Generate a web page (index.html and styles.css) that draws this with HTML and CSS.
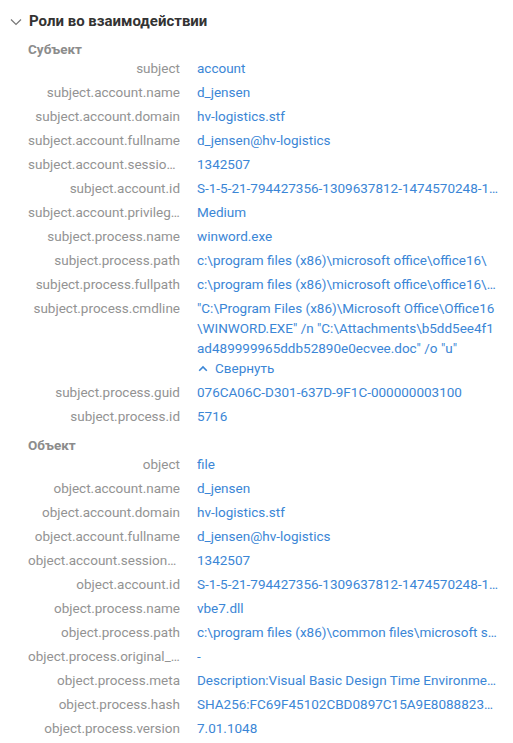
FILE: index.html
```html
<!DOCTYPE html>
<html lang="ru">
<head>
<meta charset="utf-8">
<link rel="stylesheet" href="styles.css">
</head>
<body>
<div class="panel">
  <div class="panel-head">
    <svg class="chev" width="12" height="8" viewBox="0 0 12 8"><path d="M1 1.5 L6 6.5 L11 1.5" fill="none" stroke="#777" stroke-width="1.2"/></svg>
    <span class="panel-title">Роли во взаимодействии</span>
  </div>

  <section class="group">
    <div class="group-title">Субъект</div>
    <div class="rows">
      <div class="row"><div class="k">subject</div><div class="v">account</div></div>
      <div class="row"><div class="k">subject.account.name</div><div class="v">d_jensen</div></div>
      <div class="row"><div class="k">subject.account.domain</div><div class="v">hv-logistics.stf</div></div>
      <div class="row"><div class="k">subject.account.fullname</div><div class="v">d_jensen@hv-logistics</div></div>
      <div class="row"><div class="k">subject.account.session_id</div><div class="v">1342507</div></div>
      <div class="row"><div class="k">subject.account.id</div><div class="v">S-1-5-21-794427356-1309637812-1474570248-1103</div></div>
      <div class="row"><div class="k">subject.account.privileges</div><div class="v">Medium</div></div>
      <div class="row"><div class="k">subject.process.name</div><div class="v">winword.exe</div></div>
      <div class="row"><div class="k">subject.process.path</div><div class="v">c:\program files (x86)\microsoft office\office16\</div></div>
      <div class="row"><div class="k">subject.process.fullpath</div><div class="v">c:\program files (x86)\microsoft office\office16\winword.exe</div></div>
      <div class="row"><div class="k">subject.process.cmdline</div><div class="v multi">"C:\Program Files (x86)\Microsoft Office\Office16<br>\WINWORD.EXE" /n "C:\Attachments\b5dd5ee4f1<br>ad489999965ddb52890e0ecvee.doc" /o "u"<div class="collapse"><svg width="10" height="7" viewBox="0 0 10 7"><path d="M1.2 5.8 L5 2 L8.8 5.8" fill="none" stroke="#3b86d6" stroke-width="1.6"/></svg><span>Свернуть</span></div></div></div>
      <div class="row"><div class="k">subject.process.guid</div><div class="v">076CA06C-D301-637D-9F1C-000000003100</div></div>
      <div class="row"><div class="k">subject.process.id</div><div class="v">5716</div></div>
    </div>
  </section>

  <section class="group">
    <div class="group-title">Объект</div>
    <div class="rows">
      <div class="row"><div class="k">object</div><div class="v">file</div></div>
      <div class="row"><div class="k">object.account.name</div><div class="v">d_jensen</div></div>
      <div class="row"><div class="k">object.account.domain</div><div class="v">hv-logistics.stf</div></div>
      <div class="row"><div class="k">object.account.fullname</div><div class="v">d_jensen@hv-logistics</div></div>
      <div class="row"><div class="k">object.account.session_id</div><div class="v">1342507</div></div>
      <div class="row"><div class="k">object.account.id</div><div class="v">S-1-5-21-794427356-1309637812-1474570248-1103</div></div>
      <div class="row"><div class="k">object.process.name</div><div class="v">vbe7.dll</div></div>
      <div class="row"><div class="k">object.process.path</div><div class="v">c:\program files (x86)\common files\microsoft shared\vba\vba7.1\</div></div>
      <div class="row"><div class="k">object.process.original_name</div><div class="v">-</div></div>
      <div class="row"><div class="k">object.process.meta</div><div class="v">Description:Visual Basic Design Time Environment Product:Visual Basic for Applications</div></div>
      <div class="row"><div class="k">object.process.hash</div><div class="v">SHA256:FC69F45102CBD0897C15A9E8088823A1B2C3D4</div></div>
      <div class="row"><div class="k">object.process.version</div><div class="v">7.01.1048</div></div>
    </div>
  </section>
</div>
</body>
</html>
```
FILE: styles.css
```css
* { box-sizing: border-box; }
html, body { margin: 0; padding: 0; background: #fff; }
body {
  font-family: Roboto, "Noto Sans", "Liberation Sans", sans-serif;
  font-size: 13.5px;
  color: #333;
}
.panel {
  width: 513px;
  padding: 11px 12px 0 10px;
}
.panel-head {
  display: flex;
  align-items: center;
  gap: 7px;
  height: 20px;
}
.chev { flex: none; margin-top: 1px; }
.panel-title {
  font-size: 15px;
  font-weight: 700;
  color: #333;
}
.group { padding-left: 18px; }
.group-title {
  font-weight: 700;
  color: #8c8c8c;
  line-height: 14px;
  margin-top: 11px;
}
.group + .group .group-title { margin-top: 10px; }
.rows {
  display: flex;
  flex-direction: column;
}
.row {
  display: grid;
  grid-template-columns: 152px 1fr;
  column-gap: 17px;
  padding: 2px 0;
  line-height: 20px;
}
.k {
  color: #939393;
  text-align: right;
  white-space: nowrap;
  overflow: hidden;
  text-overflow: ellipsis;
}
.v {
  color: #3b86d6;
  white-space: nowrap;
  overflow: hidden;
  text-overflow: ellipsis;
  min-width: 0;
}
.v.multi { white-space: normal; }
.collapse {
  display: flex;
  align-items: center;
  gap: 7px;
  padding-left: 1px;
}
```
